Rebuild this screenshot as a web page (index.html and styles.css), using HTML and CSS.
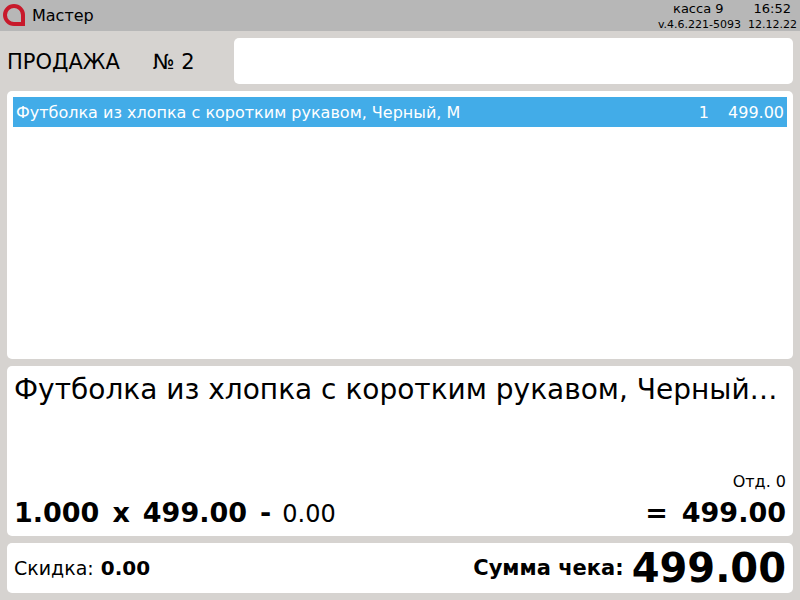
FILE: index.html
```html
<!DOCTYPE html>
<html lang="ru">
<head>
<meta charset="utf-8">
<title>Мастер</title>
<link rel="stylesheet" href="styles.css">
</head>
<body>
<header class="topbar">
  <svg class="logo" width="22" height="22" viewBox="0 0 22 22"><path d="M11 2a9 9 0 1 0 0 18h9V11A9 9 0 0 0 11 2z" fill="none" stroke="#c8192b" stroke-width="4"/></svg>
  <span class="user">Мастер</span>
  <div class="info">
    <div class="info-top"><span>касса 9</span><span class="time">16:52</span></div>
    <div class="info-bottom"><span>v.4.6.221-5093</span><span>12.12.22</span></div>
  </div>
</header>
<main class="content">
  <section class="sale-row">
    <div class="sale-title"><span>ПРОДАЖА</span><span>№ 2</span></div>
    <div class="panel search"></div>
  </section>
  <section class="panel list">
    <div class="item">
      <span class="item-name">Футболка из хлопка с коротким рукавом, Черный, M</span>
      <span class="item-qty">1</span>
      <span class="item-sum">499.00</span>
    </div>
  </section>
  <section class="panel detail">
    <div class="detail-name">Футболка из хлопка с коротким рукавом, Черный, M</div>
    <div class="dept">Отд. 0</div>
    <div class="calc">
      <b>1.000</b><b>x</b><b>499.00</b><b>-</b><span>0.00</span>
      <b class="calc-eq">=</b><b>499.00</b>
    </div>
  </section>
  <section class="panel totals">
    <span class="discount-label">Скидка:</span><b class="discount">0.00</b>
    <b class="total-label">Сумма чека:</b><b class="total">499.00</b>
  </section>
</main>
</body>
</html>
```
FILE: styles.css
```css
* { box-sizing: border-box; }
html, body { margin: 0; height: 100%; }
body {
  width: 800px;
  height: 600px;
  overflow: hidden;
  background: #d6d3d0;
  color: #000;
  font-family: "DejaVu Sans", sans-serif;
  display: flex;
  flex-direction: column;
}
.topbar {
  height: 31px;
  flex: none;
  background: #b7b7b7;
  display: flex;
  align-items: center;
  padding: 0 3px;
}
.logo { flex: none; margin-top: -1px; }
.user { font-size: 16px; margin-left: 7px; }
.info { margin-left: auto; font-size: 11px; line-height: 15px; padding-top: 2px; }
.info-top { display: flex; justify-content: flex-end; font-size: 13px; }
.info-top .time { margin-left: 30px; margin-right: 6px; }
.info-bottom { display: flex; gap: 7px; padding-top: 1px; }
.content {
  flex: 1;
  display: flex;
  flex-direction: column;
  gap: 7px;
  padding: 7px 7px 7px;
}
.panel { background: #fff; border-radius: 5px; }
.sale-row { display: flex; height: 46px; align-items: stretch; }
.sale-title {
  width: 227px;
  flex: none;
  display: flex;
  gap: 33px;
  align-items: center;
  font-size: 21px;
  padding-top: 2px;
}
.search { flex: 1; }
.list { height: 268px; padding: 6px; }
.item {
  height: 30px;
  background: #42ace8;
  color: #fff;
  display: flex;
  align-items: center;
  padding: 0 3px;
  font-size: 16px;
}
.item-name { flex: 1; }
.item-qty { margin-right: 19px; }
.detail {
  height: 170px;
  padding: 7px 7px 0;
  display: flex;
  flex-direction: column;
}
.detail-name {
  font-size: 28px;
  line-height: 34px;
  white-space: nowrap;
  overflow: hidden;
  text-overflow: ellipsis;
}
.dept { margin-top: auto; text-align: right; font-size: 16px; line-height: 18px; }
.calc {
  display: flex;
  align-items: baseline;
  gap: 13px;
  font-size: 27px;
  line-height: 30px;
  margin-top: 7px;
  margin-bottom: 7px;
}
.calc span { font-weight: normal; font-size: 24px; margin-left: -2px; }
.calc-eq { margin-left: auto; margin-right: 1px; }
.totals {
  height: 50px;
  display: flex;
  align-items: center;
  padding: 1px 7px 0;
  line-height: 49px;
}
.discount-label { font-size: 19px; }
.discount { font-size: 20px; margin-left: 7px; }
.total-label { font-size: 21px; margin-left: auto; margin-right: 8px; }
.total { font-size: 40px; }
```
